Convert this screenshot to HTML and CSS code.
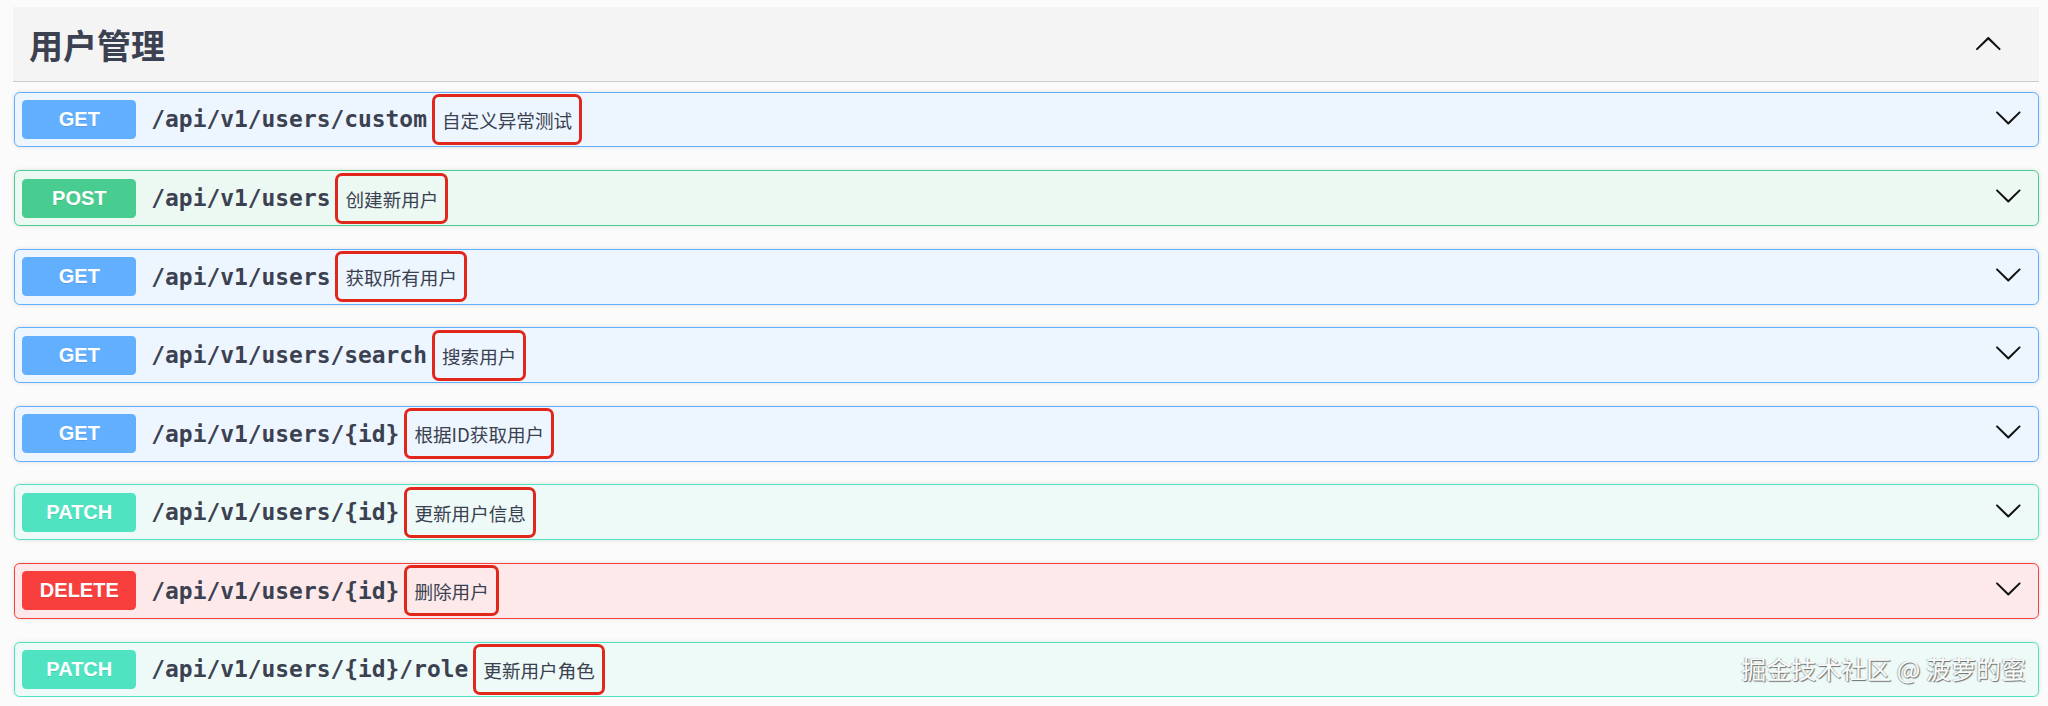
FILE: index.html
```html
<!DOCTYPE html>
<html lang="zh-CN">
<head>
    <meta charset="UTF-8">
    <meta name="viewport" content="width=device-width, initial-scale=1.0">
    <title>用户管理 - API 文档</title>
    <link rel="stylesheet" href="styles.css">
</head>
<body>
    <div class="tag-section">
        <h3 class="tag-header">
            <span>用户管理</span>
            <svg class="arrow arrow-up" viewBox="0 0 20 20"><path d="M17.418 6.109c.272-.268.709-.268.979 0s.271.701 0 .969l-7.908 7.83c-.27.268-.707.268-.979 0l-7.908-7.83c-.27-.268-.27-.701 0-.969.271-.268.709-.268.979 0L10 13.25l7.418-7.141z"/></svg>
        </h3>

        <div class="opblocks">
            <div class="opblock opblock-get">
                <span class="method">GET</span>
                <span class="path">/api/v1/users/custom</span>
                <span class="summary">自定义异常测试</span>
                <svg class="arrow" viewBox="0 0 20 20"><path d="M17.418 6.109c.272-.268.709-.268.979 0s.271.701 0 .969l-7.908 7.83c-.27.268-.707.268-.979 0l-7.908-7.83c-.27-.268-.27-.701 0-.969.271-.268.709-.268.979 0L10 13.25l7.418-7.141z"/></svg>
            </div>

            <div class="opblock opblock-post">
                <span class="method">POST</span>
                <span class="path">/api/v1/users</span>
                <span class="summary">创建新用户</span>
                <svg class="arrow" viewBox="0 0 20 20"><path d="M17.418 6.109c.272-.268.709-.268.979 0s.271.701 0 .969l-7.908 7.83c-.27.268-.707.268-.979 0l-7.908-7.83c-.27-.268-.27-.701 0-.969.271-.268.709-.268.979 0L10 13.25l7.418-7.141z"/></svg>
            </div>

            <div class="opblock opblock-get">
                <span class="method">GET</span>
                <span class="path">/api/v1/users</span>
                <span class="summary">获取所有用户</span>
                <svg class="arrow" viewBox="0 0 20 20"><path d="M17.418 6.109c.272-.268.709-.268.979 0s.271.701 0 .969l-7.908 7.83c-.27.268-.707.268-.979 0l-7.908-7.83c-.27-.268-.27-.701 0-.969.271-.268.709-.268.979 0L10 13.25l7.418-7.141z"/></svg>
            </div>

            <div class="opblock opblock-get">
                <span class="method">GET</span>
                <span class="path">/api/v1/users/search</span>
                <span class="summary">搜索用户</span>
                <svg class="arrow" viewBox="0 0 20 20"><path d="M17.418 6.109c.272-.268.709-.268.979 0s.271.701 0 .969l-7.908 7.83c-.27.268-.707.268-.979 0l-7.908-7.83c-.27-.268-.27-.701 0-.969.271-.268.709-.268.979 0L10 13.25l7.418-7.141z"/></svg>
            </div>

            <div class="opblock opblock-get">
                <span class="method">GET</span>
                <span class="path">/api/v1/users/{id}</span>
                <span class="summary">根据ID获取用户</span>
                <svg class="arrow" viewBox="0 0 20 20"><path d="M17.418 6.109c.272-.268.709-.268.979 0s.271.701 0 .969l-7.908 7.83c-.27.268-.707.268-.979 0l-7.908-7.83c-.27-.268-.27-.701 0-.969.271-.268.709-.268.979 0L10 13.25l7.418-7.141z"/></svg>
            </div>

            <div class="opblock opblock-patch">
                <span class="method">PATCH</span>
                <span class="path">/api/v1/users/{id}</span>
                <span class="summary">更新用户信息</span>
                <svg class="arrow" viewBox="0 0 20 20"><path d="M17.418 6.109c.272-.268.709-.268.979 0s.271.701 0 .969l-7.908 7.83c-.27.268-.707.268-.979 0l-7.908-7.83c-.27-.268-.27-.701 0-.969.271-.268.709-.268.979 0L10 13.25l7.418-7.141z"/></svg>
            </div>

            <div class="opblock opblock-delete">
                <span class="method">DELETE</span>
                <span class="path">/api/v1/users/{id}</span>
                <span class="summary">删除用户</span>
                <svg class="arrow" viewBox="0 0 20 20"><path d="M17.418 6.109c.272-.268.709-.268.979 0s.271.701 0 .969l-7.908 7.83c-.27.268-.707.268-.979 0l-7.908-7.83c-.27-.268-.27-.701 0-.969.271-.268.709-.268.979 0L10 13.25l7.418-7.141z"/></svg>
            </div>

            <div class="opblock opblock-patch">
                <span class="method">PATCH</span>
                <span class="path">/api/v1/users/{id}/role</span>
                <span class="summary">更新用户角色</span>
                <!-- 水印压住了这一行的箭头 -->
                <svg class="arrow arrow-covered" viewBox="0 0 20 20"><path d="M17.418 6.109c.272-.268.709-.268.979 0s.271.701 0 .969l-7.908 7.83c-.27.268-.707.268-.979 0l-7.908-7.83c-.27-.268-.27-.701 0-.969.271-.268.709-.268.979 0L10 13.25l7.418-7.141z"/></svg>
            </div>
        </div>
    </div>

    <div class="watermark">掘金技术社区 @ 菠萝的蜜</div>
</body>
</html>
```

FILE: styles.css
```css
:root {
    --text-color: #3b4151;
    --get-color: #61affe;
    --post-color: #49cc90;
    --patch-color: #50e3c2;
    --delete-color: #f93e3e;
    --mark-color: #e1261b;
}

body {
    margin: 0;
    padding: 0;
    background-color: #fbfbfb;
    color: var(--text-color);
    font-family: 'Liberation Sans', 'Noto Sans CJK SC', sans-serif;
}

.tag-section {
    padding: 7px 9px 0 13px;
}

.tag-header {
    display: flex;
    align-items: center;
    justify-content: space-between;
    height: 74px;
    margin: 0;
    padding: 0 36px 0 16px;
    background-color: #f4f4f4;
    border-bottom: 1px solid #c9cbd0;
    font-family: 'Noto Sans CJK SC', sans-serif;
    font-size: 34px;
    font-weight: 700;
    color: var(--text-color);
}

.arrow {
    width: 28.6px;
    height: 28.6px;
    fill: #111;
    flex-shrink: 0;
}

.arrow-up {
    transform: rotate(180deg);
}

.opblocks {
    display: flex;
    flex-direction: column;
    gap: 22.7px;
    margin: 9.5px 0 0 1px;
}

.opblock {
    box-sizing: border-box;
    display: flex;
    align-items: center;
    height: 55.9px;
    padding: 0 15px 0 7.3px;
    border: 1.4px solid;
    border-radius: 5.7px;
    box-shadow: 0 0 4px rgba(0,0,0,0.12);
}

.opblock .arrow {
    margin-left: auto;
    margin-bottom: 5px;
}

.opblock .arrow-covered {
    visibility: hidden;
}

.opblock-get {
    background-color: #edf5fe;
    border-color: var(--get-color);
}

.opblock-post {
    background-color: #ecf8f2;
    border-color: var(--post-color);
}

.opblock-patch {
    background-color: #edfaf7;
    border-color: var(--patch-color);
}

.opblock-delete {
    background-color: #fde9e9;
    border-color: var(--delete-color);
}

.method {
    display: flex;
    align-items: center;
    justify-content: center;
    min-width: 114px;
    height: 39px;
    border-radius: 4.3px;
    font-family: 'Liberation Sans', sans-serif;
    font-size: 20px;
    font-weight: 700;
    color: white;
    text-shadow: 0 1px 0 rgba(0,0,0,0.1);
}

.opblock-get .method { background-color: var(--get-color); }
.opblock-post .method { background-color: var(--post-color); }
.opblock-patch .method { background-color: var(--patch-color); }
.opblock-delete .method { background-color: var(--delete-color); }

.path {
    padding-left: 15px;
    font-family: 'DejaVu Sans Mono', monospace;
    font-size: 22.9px;
    font-weight: 700;
    color: var(--text-color);
}

/* 红框标注的接口说明 */
.summary {
    box-sizing: border-box;
    display: flex;
    align-items: center;
    height: 51px;
    margin-left: 5px;
    padding: 0 7px;
    border: 3.5px solid var(--mark-color);
    border-radius: 7px;
    font-family: 'Noto Sans CJK SC', sans-serif;
    font-size: 18.6px;
    color: var(--text-color);
}

.watermark {
    position: absolute;
    top: 652px;
    right: 22px;
    font-family: 'Noto Sans CJK SC', sans-serif;
    font-size: 25px;
    line-height: 1.3;
    color: #fbfbfb;
    text-shadow: 1px 1px 1px rgba(0,0,0,0.55), -1px 0 1px rgba(0,0,0,0.25);
}
```
